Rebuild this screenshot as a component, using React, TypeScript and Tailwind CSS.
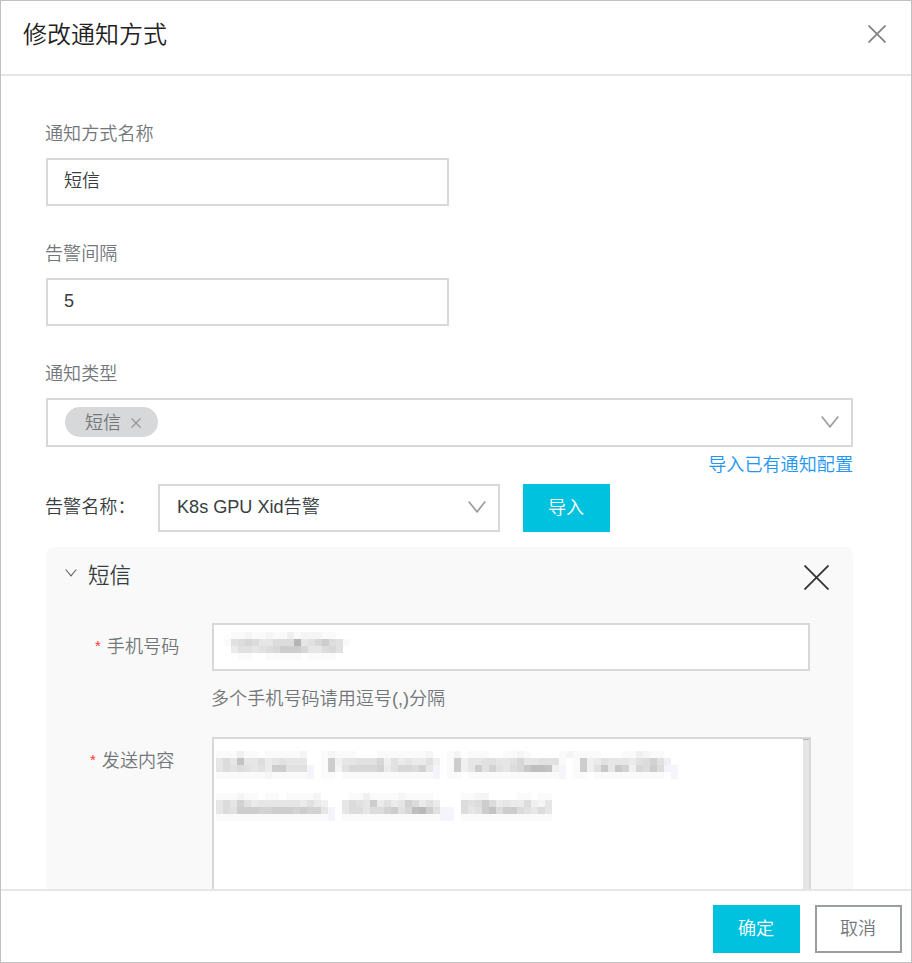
import React, { useState } from "react";
import clsx from "clsx";

const COPY = {
  title: "修改通知方式",
  nameLabel: "通知方式名称",
  intervalLabel: "告警间隔",
  typeLabel: "通知类型",
  sms: "短信",
  importLink: "导入已有通知配置",
  alertLabel: "告警名称：",
  alertValue: "K8s GPU Xid告警",
  importButton: "导入",
  phoneLabel: "手机号码",
  phoneHint: "多个手机号码请用逗号(,)分隔",
  contentLabel: "发送内容",
  confirm: "确定",
  cancel: "取消",
};

// One letter per 7px cell: "." is empty, a-o goes from light to dark, "~" is tinted
const PHONE_MASK = [
  ".aabaabaacabbbaa.",
  "afghgeegggoefhjgfa",
  ".dffefghjjjheeghf.",
  "..aa..aaaaa.aaaa..",
];

const CONTENT_MASKS = [
  [
    "aaacaa.aaaaab..abaaa...aaaaaaab..ab.aaa..aaba....abaaaa...aacbaa",
    "egeleegdefeee..ajceefffhcfdeddfc.ajceeffeefheefffa.ajcdfeeedfgifc",
    "egfgfefdjjfff~.ajbfhhhhidfhhgie~.ajcejfifeghkmmlc~.ajcfkekichgjg~~",
    "aaaaaaabaaaaa~.aa.aaaaaaaaaaaaa~.aa.aaaaaaaaaaaaa~.aa.aaaaaaaaaa.~",
  ],
  [
    "aaabaa.aa.aaaab....aacaaaabaaaa....aabb....aa.aa..",
    "egeifdeeeeeedfdc..egfejdfdeigdfd...gfgjgdeddgcbe..",
    "egfjjjiijjjijiie~.eggeggijfhmnjf~~.gefjlgjjgfege..",
    "aaaaaaaaaaaaaaaa~.aaaaaaaaaaaaaa~~.aaaaaaaaaaaaa..",
  ],
];

const maskColor = (level: string) => {
  if (level === ".") return "transparent";
  if (level === "~") return "#f4f4fd";
  const value = 255 - (level.charCodeAt(0) - 96) * 5;
  return `rgb(${value}, ${value}, ${value})`;
};

const MaskedText = ({ rows }: { rows: string[] }) => (
  <div className="flex flex-col">
    {rows.map((row, y) => (
      <div key={y} className="flex">
        {row.split("").map((level, x) => (
          <div
            key={x}
            className="h-[7px] w-[7px] shrink-0"
            style={{ backgroundColor: maskColor(level) }}
          />
        ))}
      </div>
    ))}
  </div>
);

const CrossIcon = ({ size, className, strokeWidth }) => (
  <svg
    width={size}
    height={size}
    viewBox={`0 0 ${size} ${size}`}
    className={className}
    fill="none"
    stroke="currentColor"
    strokeWidth={strokeWidth}
  >
    <path d={`M.5 .5L${size - 0.5} ${size - 0.5}M${size - 0.5} .5L.5 ${size - 0.5}`} />
  </svg>
);

const ChevronIcon = ({ width, height, className, strokeWidth }) => (
  <svg
    width={width}
    height={height}
    viewBox={`0 0 ${width} ${height}`}
    className={className}
    fill="none"
    stroke="currentColor"
    strokeWidth={strokeWidth}
  >
    <path d={`M.7 .5L${width / 2} ${height - 1.2}L${width - 0.7} .5`} />
  </svg>
);

const FieldLabel = ({ label }) => (
  <div className="-ml-px mb-2.5 h-7 pt-px leading-[27px] text-[#73777a]">{label}</div>
);

const Field = ({ label, children }) => (
  <div className="mb-[34px]">
    <FieldLabel label={label} />
    {children}
  </div>
);

const Input = ({ value }) => (
  <div className="h-12 w-[403px] border-2 border-[#d7d8d9] bg-white pl-4 leading-[43px]">
    {value}
  </div>
);

const Button = ({ label, primary = false }) => (
  <button
    className={clsx(
      "h-12 w-[87px] shrink-0 pt-px pr-px",
      primary ? "bg-[#00c1de] text-white" : "border-2 border-[#9b9ea0] text-[#73777a]"
    )}
  >
    {label}
  </button>
);

const RequiredLabel = ({ label, className }) => (
  <div className={clsx("flex shrink-0 leading-[27px] text-[#73777a]", className)}>
    <span className="-mt-0.5 mr-1.5 text-[15px] text-[#ff3333]">*</span>
    {label}
  </div>
);

const App = () => {
  const [open, setOpen] = useState(true);

  return (
    <div className="flex h-[963px] w-[912px] flex-col overflow-hidden border border-[#c1c1c1] bg-white font-['Liberation_Sans','Noto_Sans_CJK_SC',sans-serif] text-[18.1px] font-[350] text-[#373d41]">
      <div className="flex h-[75px] shrink-0 items-start justify-between border-b-2 border-[#e6e6e6] pr-[25px] pl-[22px]">
        <h1 className="pt-4 text-[24px] leading-9 font-[350] text-[#222]">{COPY.title}</h1>
        <CrossIcon size={18} strokeWidth={1.7} className="mt-6 text-[#808080]" />
      </div>

      <div className="min-h-0 flex-1 overflow-hidden pt-11 pr-[58px] pl-[45px]">
        <Field label={COPY.nameLabel}>
          <Input value={COPY.sms} />
        </Field>
        <Field label={COPY.intervalLabel}>
          <Input value="5" />
        </Field>
        <FieldLabel label={COPY.typeLabel} />
        <div className="flex h-[49px] items-center justify-between border-2 border-[#d7d8d9] pr-3 pl-[17px]">
          <div className="mb-px flex h-[30px] w-[93px] items-center rounded-full bg-[#d7d8d9] pl-5 text-[#73777a]">
            <span className="pt-[3px] leading-[27px]">{COPY.sms}</span>
            <CrossIcon size={10} strokeWidth={1.1} className="mt-0.5 ml-2.5 text-[#909396]" />
          </div>
          <ChevronIcon width={18} height={12} strokeWidth={1.7} className="mb-0.5 text-[#9b9ea0]" />
        </div>
        <div className="flex h-[37px] items-center justify-end text-[#2196f3]">
          {COPY.importLink}
        </div>

        <div className="mb-[15px] flex h-12">
          <div className="-ml-px w-[113px] shrink-0 leading-[46px]">{COPY.alertLabel}</div>
          <div className="mr-[23px] flex w-[342px] items-center justify-between border-2 border-[#d7d8d9] pr-3 pl-[17px]">
            <span>{COPY.alertValue}</span>
            <ChevronIcon width={18} height={12} strokeWidth={1.7} className="mb-0.5 text-[#9b9ea0]" />
          </div>
          <Button label={COPY.importButton} primary />
        </div>

        <div className="h-[500px] rounded-lg bg-[#f9f9f9]">
          <div className="flex h-[76px] items-start pr-6 pl-[19px]">
            <button className="mt-[22px] mr-[11px]" onClick={() => setOpen(!open)}>
              <ChevronIcon width={12} height={8} strokeWidth={1.1} className="text-[#606468]" />
            </button>
            <span className="mt-[13px] flex-1 text-[21.5px] leading-8">{COPY.sms}</span>
            <CrossIcon size={25} strokeWidth={1.8} className="mt-[18px] text-[#333]" />
          </div>
          {open && (
            <>
              <div className="flex h-[62px]">
                <RequiredLabel label={COPY.phoneLabel} className="w-[166px] pt-[11px] pl-[49px]" />
                <div className="h-12 w-[598px] border-2 border-[#d7d8d9] bg-white pt-[7px] pl-2.5">
                  <MaskedText rows={PHONE_MASK} />
                </div>
              </div>
              <div className="h-[52px] pt-px pl-[165px] leading-[27px] text-[#73777a]">
                {COPY.phoneHint}
              </div>
              <div className="flex">
                <RequiredLabel label={COPY.contentLabel} className="w-[166px] pt-[11px] pl-11" />
                <div className="flex h-[260px] w-[599px] justify-between border-2 border-[#d7d8d9] bg-white">
                  <div className="flex flex-col gap-3.5 pt-3 pl-0.5">
                    {CONTENT_MASKS.map((rows, i) => (
                      <MaskedText key={i} rows={rows} />
                    ))}
                  </div>
                  <div className="w-1.5 shrink-0 border-t border-[#b5b5b5] bg-[#e6e6e6]" />
                </div>
              </div>
            </>
          )}
        </div>
      </div>

      <div className="flex h-[73px] shrink-0 justify-end gap-[15px] border-t-2 border-[#e6e6e6] pt-3.5 pr-[9px]">
        <Button label={COPY.confirm} primary />
        <Button label={COPY.cancel} />
      </div>
    </div>
  );
};

export default App;
